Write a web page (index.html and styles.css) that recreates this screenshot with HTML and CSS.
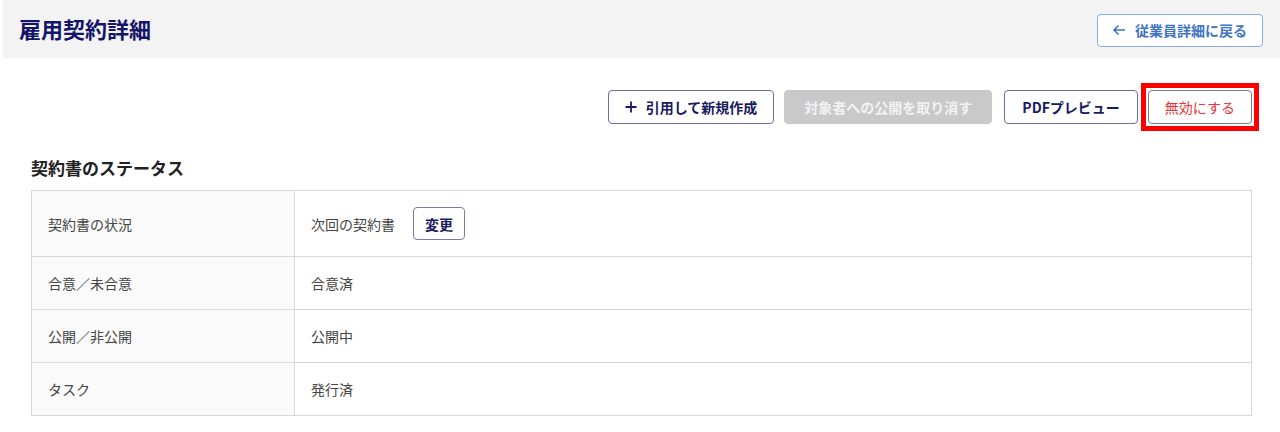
FILE: index.html
```html
<!DOCTYPE html>
<html lang="ja">
<head>
  <meta charset="UTF-8">
  <meta name="viewport" content="width=device-width, initial-scale=1.0">
  <title>雇用契約詳細</title>
  <link rel="stylesheet" href="styles.css">
</head>
<body>
<div class="header">
  <h1 class="title">雇用契約詳細</h1>
  <a class="back-btn" href="#">
    <svg width="14" height="14" viewBox="0 0 14 14"><path d="M13 7H2M6.5 2.5L2 7l4.5 4.5" fill="none" stroke="currentColor" stroke-width="1.6"/></svg>
    従業員詳細に戻る
  </a>
</div>

<div class="main">
  <div class="actions">
    <button class="btn btn-copy">
      <svg width="12" height="12" viewBox="0 0 12 12"><path d="M6 0.5v11M0.5 6h11" fill="none" stroke="currentColor" stroke-width="1.8"/></svg>
      引用して新規作成
    </button>
    <button class="btn disabled">対象者への公開を取り消す</button>
    <button class="btn btn-pdf">PDFプレビュー</button>
    <span class="highlight">
      <button class="btn danger">無効にする</button>
    </span>
  </div>

  <h2 class="section-title">契約書のステータス</h2>
  <table class="status">
    <tr class="first">
      <th>契約書の状況</th>
      <td>
        <div class="cell-row">
          <span>次回の契約書</span>
          <button class="small-btn">変更</button>
        </div>
      </td>
    </tr>
    <tr>
      <th>合意／未合意</th>
      <td>合意済</td>
    </tr>
    <tr>
      <th>公開／非公開</th>
      <td>公開中</td>
    </tr>
    <tr>
      <th>タスク</th>
      <td>発行済</td>
    </tr>
  </table>
</div>
</body>
</html>
```

FILE: styles.css
```css
* {
  padding: 0;
  margin: 0;
  box-sizing: border-box;
}

body {
  font-family: "Noto Sans CJK JP", "Noto Sans", sans-serif;
  font-size: 14px;
  color: #333;
  background: #fff;
}

.header {
  height: 58px;
  margin-left: 3px;
  padding: 0 17px 0 16px;
  background: #f3f3f3;
  display: flex;
  align-items: center;
  justify-content: space-between;
}

.title {
  font-size: 22px;
  font-weight: bold;
  color: #14146a;
  margin-top: -2px;
}

.back-btn {
  display: flex;
  align-items: center;
  gap: 9px;
  height: 33px;
  padding: 0 15px 0 14px;
  margin-top: 2px;
  background: #fff;
  border: 1px solid #8aaee0;
  border-radius: 4px;
  color: #3d72c4;
  font-weight: bold;
  font-size: 14px;
  text-decoration: none;
}

.main {
  padding: 25px 21px 0 31px;
}

.actions {
  display: flex;
  justify-content: flex-end;
  align-items: center;
}

.btn {
  display: flex;
  align-items: center;
  gap: 9px;
  height: 34px;
  padding: 0 17px;
  margin-left: 10px;
  font-family: inherit;
  font-size: 14px;
  font-weight: bold;
  color: #1a1a5e;
  background: #fff;
  border: 1px solid #6d6da6;
  border-radius: 4px;
  cursor: pointer;
}

.btn.btn-copy {
  padding: 0 16px;
}

.btn.disabled {
  padding: 0 19px;
  background: #c9c9c9;
  border-color: #c9c9c9;
  color: #f2f2f2;
  cursor: default;
}

.btn.btn-pdf {
  margin-left: 12px;
}

.highlight {
  display: block;
  margin-left: 3px;
  padding: 2px;
  border: 5px solid #f00;
}

.btn.danger {
  margin-left: 0;
  padding: 0 16px;
  font-weight: normal;
  color: #e8343a;
  border-color: #7a7a7a;
}

.section-title {
  margin-top: 24px;
  font-size: 17px;
  font-weight: bold;
  color: #222;
  line-height: 25px;
}

.status {
  width: calc(100% - 7px);
  margin-top: 10px;
  border-collapse: collapse;
  border: 1px solid #d8d8d8;
}

.status th,
.status td {
  height: 53px;
  border: 1px solid #d8d8d8;
  text-align: left;
  font-weight: normal;
  vertical-align: middle;
}

.status th {
  width: 263px;
  padding-left: 16px;
  background: #fafafa;
  color: #444;
}

.status td {
  padding-left: 16px;
  color: #444;
}

.status tr.first th,
.status tr.first td {
  height: 66px;
}

.cell-row {
  display: flex;
  align-items: center;
}

.small-btn {
  height: 33px;
  width: 52px;
  margin-left: 18px;
  font-family: inherit;
  font-size: 14px;
  font-weight: bold;
  color: #1a1a5e;
  background: #fff;
  border: 1px solid #7c7ca8;
  border-radius: 4px;
  cursor: pointer;
}
```
